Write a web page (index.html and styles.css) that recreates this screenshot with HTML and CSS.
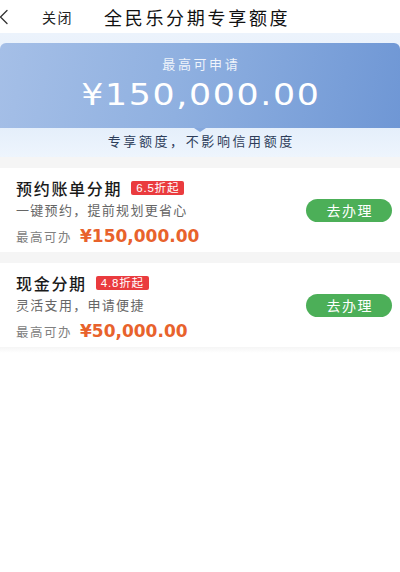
FILE: index.html
```html
<!DOCTYPE html>
<html lang="zh-CN">
<head>
<meta charset="utf-8">
<title>全民乐分期专享额度</title>
<link rel="stylesheet" href="styles.css">
</head>
<body>
<div class="page">
  <header class="nav">
    <span class="back">
      <svg width="9" height="16" viewBox="0 0 9 16"><path d="M8 1.5 L1.5 8 L8 14.5" fill="none" stroke="#333" stroke-width="1.3" stroke-linecap="round" stroke-linejoin="round"/></svg>
    </span>
    <span class="close">关闭</span>
    <span class="title">全民乐分期专享额度</span>
  </header>

  <section class="hero">
    <div class="quota">
      <div class="quota-label">最高可申请</div>
      <div class="quota-amount">¥150,000.00</div>
    </div>
    <div class="hero-note">专享额度，不影响信用额度</div>
  </section>

  <div class="cards">
    <div class="card">
      <div class="card-main">
        <div class="card-head">
          <span class="card-title">预约账单分期</span>
          <span class="badge">6.5折起</span>
        </div>
        <div class="card-desc">一键预约，提前规划更省心</div>
        <div class="card-limit">
          <span class="limit-label">最高可办</span>
          <span class="limit-amount">¥150,000.00</span>
        </div>
      </div>
      <button class="go">去办理</button>
    </div>

    <div class="card">
      <div class="card-main">
        <div class="card-head">
          <span class="card-title">现金分期</span>
          <span class="badge">4.8折起</span>
        </div>
        <div class="card-desc">灵活支用，申请便捷</div>
        <div class="card-limit">
          <span class="limit-label">最高可办</span>
          <span class="limit-amount">¥50,000.00</span>
        </div>
      </div>
      <button class="go">去办理</button>
    </div>
  </div>
  <div class="cards-end"></div>
</div>
</body>
</html>
```

FILE: styles.css
```css
* { box-sizing: border-box; }

html, body {
  margin: 0;
  padding: 0;
  background: #ffffff;
}

body {
  font-family: "Liberation Sans", "Noto Sans CJK SC", sans-serif;
  color: #222;
}

.page {
  width: 400px;
  min-height: 572px;
  background: #fff;
}

/* nav */
.nav {
  height: 33px;
  display: flex;
  align-items: center;
  background: #fff;
}

.back {
  display: flex;
  align-items: center;
  width: 9px;
  height: 16px;
  margin-left: -1px;
}

.close {
  margin-left: 34px;
  font-size: 14px;
  letter-spacing: 1.5px;
  color: #222;
  font-family: "Noto Sans CJK SC", sans-serif;
}

.title {
  margin-left: 31px;
  font-size: 18px;
  letter-spacing: 2.7px;
  color: #111;
  font-family: "Noto Sans CJK SC", sans-serif;
}

/* hero */
.hero {
  height: 124px;
  padding-top: 10px;
  background: linear-gradient(180deg, #ecf3fc 0%, #e2edfa 70%, #eef5fd 100%);
}

.quota {
  position: relative;
  height: 85px;
  border-radius: 6px 6px 0 0;
  background: linear-gradient(100deg, #a5bfe7 0%, #8fb0e0 45%, #6f97d5 100%);
  display: flex;
  flex-direction: column;
  align-items: center;
  padding-top: 12px;
}

.quota::after {
  content: "";
  position: absolute;
  left: 194px;
  bottom: -4px;
  width: 0;
  height: 0;
  border-left: 6px solid transparent;
  border-right: 6px solid transparent;
  border-top: 4px solid #85a8dd;
}

.quota-label {
  font-family: "Noto Sans CJK SC", sans-serif;
  font-size: 13px;
  line-height: 18px;
  letter-spacing: 2.6px;
  margin-right: -2.6px;
  color: rgba(255, 255, 255, 0.88);
}

.quota-amount {
  margin-top: 2px;
  font-family: "DejaVu Sans", sans-serif;
  font-size: 31px;
  line-height: 38px;
  letter-spacing: 1.5px;
  margin-right: -1.5px;
  color: #ffffff;
  transform: scaleX(1.12);
}

.hero-note {
  margin-top: 3px;
  text-align: center;
  font-family: "Noto Sans CJK SC", sans-serif;
  font-size: 13px;
  line-height: 20px;
  letter-spacing: 2.6px;
  margin-right: -2.6px;
  color: #2d3d5a;
}

/* cards */
.cards {
  background: #f5f5f5;
  padding-top: 11px;
  display: flex;
  flex-direction: column;
  gap: 11px;
}

.cards-end {
  height: 6px;
  background: linear-gradient(180deg, #f5f5f5, #ffffff);
}

.card {
  height: 84px;
  background: #fff;
  display: flex;
  align-items: center;
  justify-content: space-between;
  padding: 0 8px 0 16px;
}

.card-main {
  align-self: flex-start;
  padding-top: 10px;
  display: flex;
  flex-direction: column;
}

.card-head {
  display: flex;
  align-items: center;
  height: 20px;
}

.card-title {
  font-family: "Noto Sans CJK SC", sans-serif;
  font-size: 16px;
  font-weight: 500;
  letter-spacing: 1.7px;
  color: #1a1a1a;
}

.badge {
  margin-left: 9px;
  height: 14px;
  line-height: 14px;
  padding: 0 5px;
  border-radius: 2px;
  background: #ea3b3e;
  color: #fff;
  font-size: 11.5px;
  letter-spacing: 0.8px;
}

.card-desc {
  margin-top: 1px;
  font-family: "Noto Sans CJK SC", sans-serif;
  font-size: 13px;
  line-height: 22px;
  letter-spacing: 1.3px;
  color: #666;
}

.card-limit {
  display: flex;
  align-items: center;
  height: 26px;
  margin-top: 2px;
}

.limit-label {
  font-family: "Noto Sans CJK SC", sans-serif;
  font-size: 12.5px;
  letter-spacing: 1.5px;
  color: #808080;
}

.limit-amount {
  margin-left: 8px;
  font-family: "DejaVu Sans", sans-serif;
  font-weight: bold;
  font-size: 17px;
  color: #e8622c;
}

.go {
  width: 86px;
  height: 23px;
  border: none;
  border-radius: 12px;
  background: #4caf58;
  color: #fff;
  font-family: "Noto Sans CJK SC", sans-serif;
  font-size: 14px;
  letter-spacing: 1.5px;
  padding: 0 0 0 1.5px;
  line-height: 23px;
  margin-top: 0;
}
```
